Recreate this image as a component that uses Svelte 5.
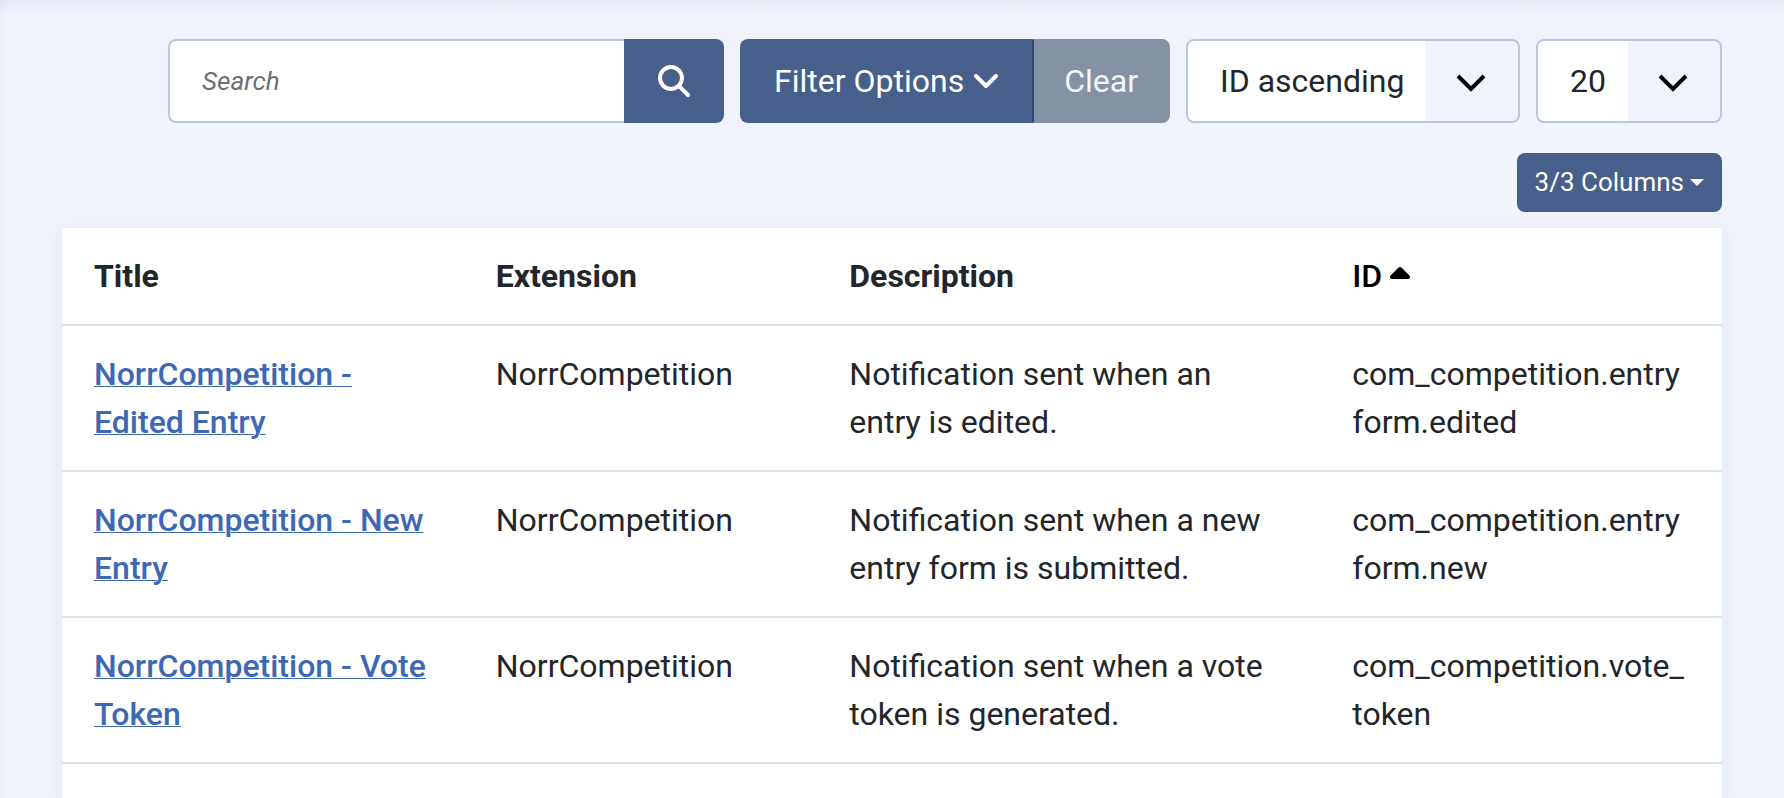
<script lang="ts">
    let search = $state('');
    let ordering = $state('ID ascending');
    let limit = $state('20');

    const orderings = ['ID ascending', 'ID descending'];
    const limits = ['5', '10', '20', '50'];

    const templates = [
        {
            title: 'NorrCompetition - Edited Entry',
            extension: 'NorrCompetition',
            description: 'Notification sent when an entry is edited.',
            id: 'com_competition.entryform.edited'
        },
        {
            title: 'NorrCompetition - New Entry',
            extension: 'NorrCompetition',
            description: 'Notification sent when a new entry form is submitted.',
            id: 'com_competition.entryform.new'
        },
        {
            title: 'NorrCompetition - Vote Token',
            extension: 'NorrCompetition',
            description: 'Notification sent when a vote token is generated.',
            id: 'com_competition.vote_token'
        }
    ];
</script>

{#snippet chevron()}
    <svg class="select-icon" viewBox="0 0 30 18" aria-hidden="true">
        <path d="M2 2 L15 15 L28 2" fill="none" stroke="#000" stroke-width="4" />
    </svg>
{/snippet}

<main class="page">
    <form class="toolbar" onsubmit={(e) => e.preventDefault()}>
        <div class="group search">
            <input type="text" placeholder="Search" aria-label="Search" bind:value={search} />
            <button class="btn btn-search" type="submit" aria-label="Search">
                <svg class="search-icon" viewBox="0 0 512 512" aria-hidden="true">
                    <path fill="currentColor" d="M416 208c0 45.9-14.9 88.3-40 122.7L502.6 457.4c12.5 12.5 12.5 32.8 0 45.3s-32.8 12.5-45.3 0L330.7 376c-34.4 25.2-76.8 40-122.7 40C93.1 416 0 322.9 0 208S93.1 0 208 0S416 93.1 416 208zM208 352a144 144 0 1 0 0-288 144 144 0 1 0 0 288z" />
                </svg>
            </button>
        </div>
        <div class="group">
            <button class="btn btn-filter" type="button">
                Filter Options
                <svg class="angle-icon" viewBox="0 0 24 14" aria-hidden="true">
                    <path d="M2 2 L12 12 L22 2" fill="none" stroke="currentColor" stroke-width="4" stroke-linecap="round" stroke-linejoin="round" />
                </svg>
            </button>
            <button class="btn btn-clear" type="button" disabled={!search}>Clear</button>
        </div>
        <div class="select ordering">
            <select aria-label="Sort Table By" bind:value={ordering}>
                {#each orderings as option}
                    <option>{option}</option>
                {/each}
            </select>
            {@render chevron()}
        </div>
        <div class="select limit">
            <select aria-label="Items per page" bind:value={limit}>
                {#each limits as option}
                    <option>{option}</option>
                {/each}
            </select>
            {@render chevron()}
        </div>
    </form>

    <button class="btn btn-columns" type="button">3/3 Columns<span class="caret"></span></button>

    <div class="card">
        <table>
            <colgroup>
                <col class="col-title" />
                <col class="col-extension" />
                <col class="col-description" />
                <col class="col-id" />
            </colgroup>
            <thead>
                <tr>
                    <th scope="col">Title</th>
                    <th scope="col">Extension</th>
                    <th scope="col">Description</th>
                    <th scope="col" aria-sort="ascending">
                        <a class="sort" href="#id">ID
                            <svg class="sort-icon" viewBox="0 128 320 192" aria-hidden="true">
                                <path fill="currentColor" d="M182.6 137.4c-12.5-12.5-32.8-12.5-45.3 0l-128 128c-9.2 9.2-11.9 22.9-6.9 34.9s16.6 19.8 29.6 19.8H288c12.9 0 24.6-7.8 29.6-19.8s2.2-25.7-6.9-34.9l-128-128z" />
                            </svg>
                        </a>
                    </th>
                </tr>
            </thead>
            <tbody>
                {#each templates as template}
                    <tr>
                        <th scope="row"><a href="#{template.id}">{template.title}</a></th>
                        <td>{template.extension}</td>
                        <td>{template.description}</td>
                        <td class="break">{template.id}</td>
                    </tr>
                {/each}
            </tbody>
        </table>
    </div>
</main>

<style>
    :global(body) {
        margin: 0;
        background: #f0f3fc;
    }

    .page {
        box-sizing: border-box;
        min-height: 100vh;
        padding: 39px 62px 0;
        display: flex;
        flex-direction: column;
        overflow: hidden;
        /* soft shade cast by the header and the sidebar */
        background:
            linear-gradient(rgba(30, 40, 80, 0.05), transparent 12px),
            linear-gradient(to right, rgba(30, 60, 120, 0.03), transparent 10px),
            #f0f3fc;
        color: #22262a;
        font-family: Roboto, "Liberation Sans", sans-serif;
        font-size: 32px;
        line-height: 48px;
    }

    .toolbar {
        display: flex;
        justify-content: flex-end;
        gap: 16px;
    }

    .group {
        display: flex;
    }

    .search {
        flex: 0 1 556px;
        min-width: 0;
    }

    input {
        box-sizing: border-box;
        flex: 1;
        min-width: 0;
        height: 84px;
        padding: 0 32px;
        border: 2px solid #bac7de;
        border-right: 0;
        border-radius: 8px 0 0 8px;
        background: #fff;
        color: inherit;
        font: inherit;
        font-size: 26px;
    }

    input::placeholder {
        color: #6d6f73;
        font-style: italic;
        opacity: 1;
    }

    .btn {
        padding: 16px 32px;
        border: 2px solid #475f8b;
        border-radius: 8px;
        background: #475f8b;
        color: #fff;
        font: inherit;
        white-space: nowrap;
        cursor: pointer;
    }

    .btn-search {
        display: flex;
        align-items: center;
        border-radius: 0 8px 8px 0;
    }

    .search-icon {
        width: 32px;
        height: 32px;
    }

    .btn-filter {
        padding-right: 34px;
        border-right-color: #2f4976;
        border-radius: 8px 0 0 8px;
    }

    .angle-icon {
        width: 24px;
        height: 14px;
        margin-left: 2px;
        vertical-align: 4px;
    }

    .btn-clear {
        padding: 16px 30px 16px 28px;
        border-color: #8591a5;
        border-radius: 0 8px 8px 0;
        background: #8591a5;
        color: #f3f5f8;
    }

    .select {
        position: relative;
        display: flex;
    }

    .ordering {
        width: 334px;
    }

    .limit {
        width: 186px;
    }

    select {
        width: 100%;
        height: 84px;
        padding: 0 94px 0 32px;
        border: 2px solid #bac7de;
        border-radius: 8px;
        appearance: none;
        background: linear-gradient(to left, #f0f3fc 92px, #fff 92px);
        color: inherit;
        font: inherit;
    }

    /* sits over the tinted end of the select */
    .select-icon {
        position: absolute;
        top: 35px;
        right: 34px;
        width: 30px;
        height: 18px;
        pointer-events: none;
    }

    .btn-columns {
        align-self: flex-end;
        display: flex;
        align-items: center;
        gap: 6px;
        margin: 30px 0 16px;
        padding: 8px 16px;
        font-size: 26px;
        line-height: 39px;
    }

    .caret {
        border: 7px solid transparent;
        border-top-color: #fff;
        border-bottom: 0;
    }

    .card {
        flex: 1;
        background: #fff;
        box-shadow: 0 4px 20px rgba(30, 60, 130, 0.07);
    }

    table {
        width: 100%;
        border-collapse: separate;
        border-spacing: 0;
        table-layout: fixed;
    }

    .col-title,
    .col-id {
        width: 24.2%;
    }

    .col-extension {
        width: 21.3%;
    }

    .col-description {
        width: 30.3%;
    }

    th,
    td {
        padding: 24px 32px;
        border-bottom: 2px solid #dee2e6;
        text-align: left;
        vertical-align: top;
    }

    th {
        font-weight: 700;
    }

    tbody a {
        color: #3d69b4;
        font-weight: 500;
        text-decoration-thickness: 1px;
    }

    .sort {
        color: #000;
        font-weight: 500;
        text-decoration: none;
    }

    .sort-icon {
        width: 20px;
        height: 12px;
        vertical-align: 8px;
    }

    .break {
        word-break: break-all;
    }
</style>
